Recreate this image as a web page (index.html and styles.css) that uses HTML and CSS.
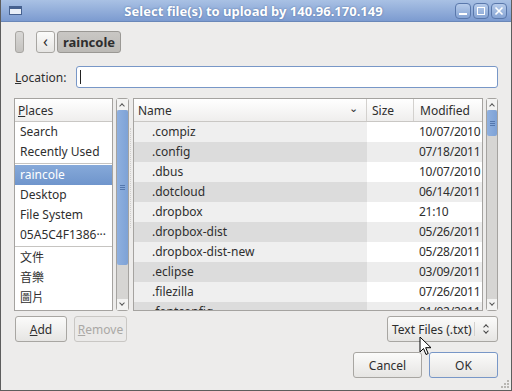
FILE: index.html
```html
<!DOCTYPE html>
<html lang="en">
<head>
  <meta charset="UTF-8">
  <title>Select file(s) to upload</title>
  <link rel="stylesheet" href="styles.css">
</head>
<body>
  <div class="window">
    <div class="titlebar">
      <span class="win-icon"></span>
      <span class="title">Select file(s) to upload by 140.96.170.149</span>
      <div class="win-buttons">
        <span class="wbtn">
          <svg width="16" height="16" viewBox="0 0 16 16"><rect x="4" y="10" width="8" height="2" fill="#fff"/></svg>
        </span>
        <span class="wbtn">
          <svg width="16" height="16" viewBox="0 0 16 16"><rect x="4.5" y="4.5" width="7" height="7" fill="none" stroke="#fff"/></svg>
        </span>
        <span class="wbtn">
          <svg width="16" height="16" viewBox="0 0 16 16"><path d="M4.5 4.5l7 7M11.5 4.5l-7 7" stroke="#fff" stroke-width="1.6"/></svg>
        </span>
      </div>
    </div>

    <div class="content">
      <div class="pathbar">
        <span class="btn toggle"></span>
        <span class="btn back">&lsaquo;</span>
        <span class="btn crumb">raincole</span>
      </div>

      <div class="location">
        <label><u>L</u>ocation:</label>
        <div class="loc-input"><span class="caret"></span></div>
      </div>

      <div class="panes">
        <div class="places">
          <div class="header"><u>P</u>laces</div>
          <div class="item">Search</div>
          <div class="item">Recently Used</div>
          <div class="sep"></div>
          <div class="item selected">raincole</div>
          <div class="item">Desktop</div>
          <div class="item">File System</div>
          <div class="item">05A5C4F1386&middot;&middot;&middot;</div>
          <div class="sep"></div>
          <div class="item">文件</div>
          <div class="item">音樂</div>
          <div class="item">圖片</div>
        </div>
        <div class="scrollbar">
          <span class="arrow up"></span>
          <div class="trough"><span class="thumb places-thumb"><i></i></span></div>
          <span class="arrow down"></span>
        </div>

        <div class="grip"></div>

        <div class="files">
          <div class="header cols">
            <span class="c-name">Name <span class="sort">&#8964;</span></span>
            <span class="c-size">Size</span>
            <span class="c-mod">Modified</span>
          </div>
          <div class="row"><span class="c-name">.compiz</span><span class="c-size"></span><span class="c-mod">10/07/2010</span></div>
          <div class="row"><span class="c-name">.config</span><span class="c-size"></span><span class="c-mod">07/18/2011</span></div>
          <div class="row"><span class="c-name">.dbus</span><span class="c-size"></span><span class="c-mod">10/07/2010</span></div>
          <div class="row"><span class="c-name">.dotcloud</span><span class="c-size"></span><span class="c-mod">06/14/2011</span></div>
          <div class="row"><span class="c-name">.dropbox</span><span class="c-size"></span><span class="c-mod">21:10</span></div>
          <div class="row"><span class="c-name">.dropbox-dist</span><span class="c-size"></span><span class="c-mod">05/26/2011</span></div>
          <div class="row"><span class="c-name">.dropbox-dist-new</span><span class="c-size"></span><span class="c-mod">05/28/2011</span></div>
          <div class="row"><span class="c-name">.eclipse</span><span class="c-size"></span><span class="c-mod">03/09/2011</span></div>
          <div class="row"><span class="c-name">.filezilla</span><span class="c-size"></span><span class="c-mod">07/26/2011</span></div>
          <div class="row"><span class="c-name">.fontconfig</span><span class="c-size"></span><span class="c-mod">01/02/2011</span></div>
        </div>
        <div class="scrollbar narrow">
          <span class="arrow up"></span>
          <div class="trough"><span class="thumb files-thumb"><i></i></span></div>
          <span class="arrow down"></span>
        </div>
      </div>

      <div class="actions">
        <span class="btn push"><u>A</u>dd</span>
        <span class="btn push disabled"><u>R</u>emove</span>
        <span class="btn filter">Text Files (.txt)<span class="updown"></span></span>
      </div>

      <div class="dialog-buttons">
        <span class="btn push wide">Cancel</span>
        <span class="btn push wide default">OK</span>
      </div>
    </div>

    <svg class="cursor" width="14" height="20" viewBox="0 0 14 20">
      <path d="M1 1v15l3.5-3.5 2.5 6 2.2-1-2.5-5.8H12z" fill="#fff" stroke="#000" stroke-width="1"/>
    </svg>
    <svg class="resize" width="10" height="10" viewBox="0 0 10 10">
      <g fill="#b8b6b2"><rect x="7" y="1" width="2" height="2"/><rect x="4" y="4" width="2" height="2"/><rect x="7" y="4" width="2" height="2"/><rect x="1" y="7" width="2" height="2"/><rect x="4" y="7" width="2" height="2"/><rect x="7" y="7" width="2" height="2"/></g>
    </svg>
  </div>
</body>
</html>
```

FILE: styles.css
```css
body {
  margin: 0;
  font-family: "Noto Sans", "Noto Sans CJK TC", sans-serif;
  font-size: 12px;
  color: #2e2e2e;
}

.window {
  position: relative;
  width: 510px;
  height: 390px;
  background: #edeceb;
  border: 1px solid #5d5d5d;
  border-top: none;
  display: flex;
  flex-direction: column;
  overflow: hidden;
}

.titlebar {
  height: 22px;
  flex: none;
  display: flex;
  align-items: center;
  background: linear-gradient(#a9c1e4, #7c9bd0);
  border-bottom: 1px solid #6a87b8;
  box-sizing: border-box;
  padding: 0 4px 0 8px;
}

.win-icon {
  width: 13px;
  height: 9px;
  border: 1px solid #46618f;
  border-top-width: 3px;
  background: #e8eef7;
  box-sizing: border-box;
}

.title {
  flex: 1;
  text-align: center;
  color: #fff;
  font-weight: bold;
  font-size: 13px;
  text-shadow: 0 0 2px rgba(40, 70, 120, 0.6);
  padding-left: 30px;
}

.win-buttons {
  display: flex;
  gap: 2px;
}

.wbtn {
  width: 16px;
  height: 16px;
  border: 1px solid #5a78ab;
  border-radius: 4px;
  background: linear-gradient(#b6cbea, #86a4d4);
  box-sizing: border-box;
  display: flex;
  align-items: center;
  justify-content: center;
}

.wbtn svg {
  flex: none;
}

.content {
  flex: 1;
  padding: 9px 13px 0 13px;
  display: flex;
  flex-direction: column;
}

.btn {
  box-sizing: border-box;
  border: 1px solid #a8a6a2;
  border-radius: 3px;
  background: linear-gradient(#fbfbfa, #e6e5e3);
  display: inline-flex;
  align-items: center;
  justify-content: center;
}

.pathbar {
  display: flex;
  height: 22px;
  padding-left: 1px;
}

.toggle {
  width: 9px;
  background: linear-gradient(#d9d8d6, #c4c2bf);
}

.back {
  width: 19px;
  margin-left: 12px;
  font-size: 16px;
  line-height: 1;
  padding-bottom: 3px;
}

.crumb {
  width: 64px;
  margin-left: 2px;
  font-weight: bold;
  font-size: 13px;
  background: linear-gradient(#c9c7c4, #bcbab6);
  border-color: #9a9894;
}

.location {
  display: flex;
  align-items: center;
  margin-top: 13px;
  height: 22px;
}

.location label {
  width: 61px;
  padding-left: 1px;
  font-size: 12px;
}

.loc-input {
  flex: 1;
  height: 22px;
  box-sizing: border-box;
  border: 1px solid #7897c7;
  border-radius: 3px;
  background: #fff;
  display: flex;
  align-items: center;
  padding-left: 3px;
}

.caret {
  width: 1px;
  height: 14px;
  background: #222;
}

.panes {
  display: flex;
  margin-top: 10px;
  height: 213px;
}

.places {
  width: 99px;
  flex: none;
  box-sizing: border-box;
  border: 1px solid #a5a3a0;
  background: #fff;
  overflow: hidden;
}

.header {
  height: 23px;
  box-sizing: border-box;
  border-bottom: 1px solid #c9c7c4;
  background: linear-gradient(#ffffff, #efeeed);
  display: flex;
  align-items: center;
  padding-left: 3px;
  font-size: 12px;
}

.item {
  height: 20px;
  line-height: 20px;
  padding-left: 5px;
  white-space: nowrap;
}

.item.selected {
  background: linear-gradient(#86a9d9, #6f95cc);
  color: #fff;
}

.sep {
  height: 1px;
  background: #c6c4c1;
  margin: 1px 0;
}

.scrollbar {
  width: 13px;
  flex: none;
  margin-left: 3px;
  display: flex;
  flex-direction: column;
  box-sizing: border-box;
  border: 1px solid #a5a3a0;
  border-radius: 3px;
  background: #d6d5d3;
}

.scrollbar.narrow {
  width: 12px;
}

.arrow {
  height: 11px;
  flex: none;
  background: #f3f3f2;
  position: relative;
}

.arrow::after {
  content: "";
  position: absolute;
  left: 3px;
  width: 3px;
  height: 3px;
  border-left: 1px solid #555;
  border-top: 1px solid #555;
}

.arrow.up::after {
  top: 5px;
  transform: rotate(45deg);
}

.arrow.down::after {
  top: 2px;
  transform: rotate(225deg);
}

.trough {
  flex: 1;
  display: flex;
  flex-direction: column;
}

.thumb {
  display: flex;
  align-items: center;
  justify-content: center;
  background: linear-gradient(90deg, #8fb0df, #7ea2d6);
  border-radius: 2px;
}

.thumb i {
  width: 5px;
  height: 5px;
  border-top: 1px solid #5477ad;
  border-bottom: 1px solid #5477ad;
  box-sizing: border-box;
  background: linear-gradient(#5477ad, #5477ad) center / 5px 1px no-repeat;
}

.places-thumb {
  height: 155px;
}

.files-thumb {
  height: 26px;
}

.grip {
  width: 1px;
  flex: none;
  border-left: 1px dotted #d0cecb;
  margin: 30px 1px 0 1px;
  height: 100px;
}

.files {
  flex: 1;
  min-width: 0;
  box-sizing: border-box;
  border: 1px solid #a5a3a0;
  background: #fff;
  overflow: hidden;
}

.cols {
  padding-left: 0;
}

.cols span, .row span {
  box-sizing: border-box;
  flex: none;
}

.cols span {
  height: 100%;
  display: flex;
  align-items: center;
}

.c-name {
  width: 233px;
  padding-left: 4px;
  position: relative;
}

.c-size {
  width: 47px;
  padding-left: 5px;
}

.cols .c-mod, .row .c-mod {
  flex: 1;
  padding-left: 6px;
}

.row .c-mod {
  padding-left: 5px;
  letter-spacing: -0.25px;
}

.cols .c-name, .cols .c-size {
  border-right: 1px solid #d3d1ce;
}

.sort {
  position: absolute;
  right: 8px;
  top: 0;
  font-size: 11px;
  padding-bottom: 5px;
}

.row {
  display: flex;
  height: 20px;
  line-height: 20px;
  white-space: nowrap;
}

.row .c-name {
  padding-left: 18px;
  background: #efefef;
}

.row:nth-child(odd) .c-name {
  background: #dcdcdc;
}

.row:nth-child(odd) .c-size, .row:nth-child(odd) .c-mod {
  background: #ededed;
}

.actions {
  display: flex;
  align-items: center;
  margin-top: 5px;
  height: 26px;
  padding-left: 1px;
}

.push {
  height: 26px;
  width: 52px;
  font-size: 12px;
}

.push.disabled {
  margin-left: 7px;
  width: 53px;
  color: #aaa8a5;
  border-color: #c9c7c4;
  background: #ebeae9;
}

.filter {
  margin-left: auto;
  width: 111px;
  height: 26px;
  justify-content: flex-start;
  padding-left: 4px;
  position: relative;
}

.updown {
  position: absolute;
  right: 0;
  top: 5px;
  width: 22px;
  height: 14px;
  border-left: 1px solid #d3d1ce;
}

.updown::before, .updown::after {
  content: "";
  position: absolute;
  left: 9px;
  width: 3px;
  height: 3px;
  border-left: 1px solid #444;
  border-top: 1px solid #444;
}

.updown::before {
  top: 3px;
  transform: rotate(45deg);
}

.updown::after {
  top: 7px;
  transform: rotate(225deg);
}

.dialog-buttons {
  display: flex;
  justify-content: flex-end;
  gap: 7px;
  margin-top: 10px;
}

.push.wide {
  width: 69px;
}

.push.default {
  border-color: #7897c7;
}

.cursor {
  position: absolute;
  left: 418px;
  top: 336px;
}

.resize {
  position: absolute;
  right: 1px;
  bottom: 1px;
}
```
